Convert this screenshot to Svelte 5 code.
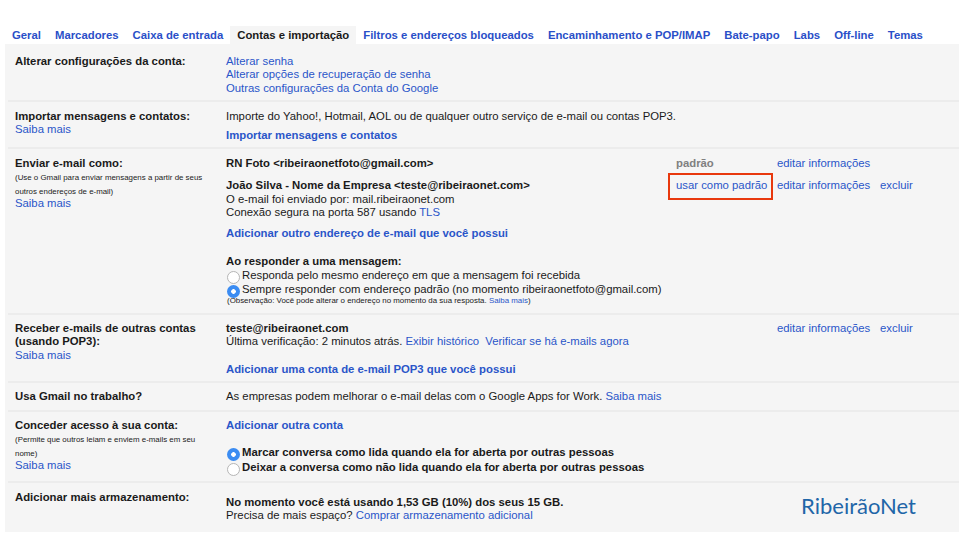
<script>
    const tabs = ['Geral', 'Marcadores', 'Caixa de entrada', 'Contas e importação', 'Filtros e endereços bloqueados', 'Encaminhamento e POP/IMAP', 'Bate-papo', 'Labs', 'Off-line', 'Temas'];
    const active = 'Contas e importação';
</script>

<div class="page">
    <nav class="tabs">
        {#each tabs as tab}
            <span class="tab" class:active={tab === active}>{tab}</span>
        {/each}
    </nav>

    <div class="panel">
        <section class="row r1">
            <div class="label"><b>Alterar configurações da conta:</b></div>
            <div class="main">
                <a href="#a">Alterar senha</a><br>
                <a href="#a">Alterar opções de recuperação de senha</a><br>
                <a href="#a">Outras configurações da Conta do Google</a>
            </div>
        </section>

        <section class="row r2">
            <div class="label"><b>Importar mensagens e contatos:</b><br><a href="#a">Saiba mais</a></div>
            <div class="main">
                Importe do Yahoo!, Hotmail, AOL ou de qualquer outro serviço de e-mail ou contas POP3.
                <p class="action"><a href="#a"><b>Importar mensagens e contatos</b></a></p>
            </div>
        </section>

        <section class="row r3">
            <div class="label">
                <b>Enviar e-mail como:</b>
                <p class="small">(Use o Gmail para enviar mensagens a partir de seus outros endereços de e-mail)</p>
                <a href="#a">Saiba mais</a>
            </div>
            <div class="main">
                <div class="acct first">
                    <b>RN Foto &lt;ribeiraonetfoto@gmail.com&gt;</b>
                    <b class="grey">padrão</b>
                    <a href="#a">editar informações</a>
                    <span></span>
                </div>
                <div class="acct">
                    <div>
                        <b>João Silva - Nome da Empresa &lt;teste@ribeiraonet.com&gt;</b><br>
                        O e-mail foi enviado por: mail.ribeiraonet.com<br>
                        Conexão segura na porta 587 usando <a href="#a">TLS</a>
                    </div>
                    <div><a class="boxed" href="#a">usar como padrão</a></div>
                    <a href="#a">editar informações</a>
                    <a href="#a">excluir</a>
                </div>
                <p class="add"><a href="#a"><b>Adicionar outro endereço de e-mail que você possui</b></a></p>
                <p class="reply"><b>Ao responder a uma mensagem:</b></p>
                <div class="opt"><i class="radio"></i>Responda pelo mesmo endereço em que a mensagem foi recebida</div>
                <div class="opt"><i class="radio on"></i>Sempre responder com endereço padrão (no momento ribeiraonetfoto@gmail.com)</div>
                <p class="note">(Observação: Você pode alterar o endereço no momento da sua resposta. <a href="#a">Saiba mais</a>)</p>
            </div>
        </section>

        <section class="row r4">
            <div class="label"><b>Receber e-mails de outras contas (usando POP3):</b><br><a href="#a">Saiba mais</a></div>
            <div class="main">
                <div class="acct">
                    <div>
                        <b>teste@ribeiraonet.com</b><br>
                        Última verificação: 2 minutos atrás. <a href="#a">Exibir histórico</a>
                        <a class="verify" href="#a">Verificar se há e-mails agora</a>
                    </div>
                    <span></span>
                    <a href="#a">editar informações</a>
                    <a href="#a">excluir</a>
                </div>
                <p class="add pop"><a href="#a"><b>Adicionar uma conta de e-mail POP3 que você possui</b></a></p>
            </div>
        </section>

        <section class="row r5">
            <div class="label"><b>Usa Gmail no trabalho?</b></div>
            <div class="main">As empresas podem melhorar o e-mail delas com o Google Apps for Work. <a href="#a">Saiba mais</a></div>
        </section>

        <section class="row r6">
            <div class="label">
                <b>Conceder acesso à sua conta:</b>
                <p class="small">(Permite que outros leiam e enviem e-mails em seu nome)</p>
                <a href="#a">Saiba mais</a>
            </div>
            <div class="main">
                <a href="#a"><b>Adicionar outra conta</b></a>
                <div class="opt gap"><i class="radio on"></i><b>Marcar conversa como lida quando ela for aberta por outras pessoas</b></div>
                <div class="opt"><i class="radio"></i><b>Deixar a conversa como não lida quando ela for aberta por outras pessoas</b></div>
            </div>
        </section>

        <section class="row r7">
            <div class="label"><b>Adicionar mais armazenamento:</b></div>
            <div class="main storage">
                <div>
                    <b>No momento você está usando 1,53 GB (10%) dos seus 15 GB.</b><br>
                    Precisa de mais espaço? <a href="#a">Comprar armazenamento adicional</a>
                </div>
                <div class="logo">RibeirãoNet</div>
            </div>
        </section>
    </div>
</div>

<style>
    :global(body) {
        background: #fff;
    }

    .page {
        width: 960px;
        height: 543px;
        padding-top: 26px;
        box-sizing: border-box;
        font-family: "Liberation Sans", Arial, sans-serif;
        font-size: 11.33px;
        line-height: 13.3px;
        color: #1a1a1a;
        overflow: hidden;
    }

    a {
        color: #2a55c9;
        text-decoration: none;
    }

    p {
        margin: 0;
    }

    .tabs {
        display: flex;
        height: 18px;
        padding-left: 5px;
    }

    .tab {
        padding: 3px 7px 0;
        font-weight: bold;
        color: #2a4fc8;
        white-space: nowrap;
    }

    .tab.active {
        background: #f5f5f5;
        color: #1a1a1a;
    }

    .panel {
        margin-left: 5px;
        width: 954px;
        height: 488px;
        background: #f5f5f5;
    }

    .row {
        display: grid;
        grid-template-columns: 211px 1fr;
        box-sizing: border-box;
        margin-left: 3px;
        padding: 11px 0 0 7px;
        border-bottom: 2px solid #ececec;
    }

    .r1 { height: 58px; }
    .r2 { height: 47px; padding-top: 8px; }
    .r3 { height: 166px; padding-top: 8px; }
    .r4 { height: 68px; padding-top: 7px; }
    .r5 { height: 29px; padding-top: 7px; }
    .r6 { height: 71px; padding-top: 7px; }
    .r7 { height: 49px; padding-top: 8px; border-bottom: 0; }

    .label {
        padding-right: 8px;
    }

    .small {
        font-size: 7.9px;
        line-height: 13.3px;
        margin: 1px 0 -1px;
        color: #222;
    }

    .action {
        margin-top: 6px;
    }

    .acct {
        display: grid;
        grid-template-columns: 450px 101px 103px auto;
    }

    .first {
        margin-bottom: 9px;
    }

    .grey {
        color: #808080;
    }

    .boxed {
        position: relative;
        display: inline-block;
    }

    .boxed::after {
        content: "";
        position: absolute;
        left: -8px;
        top: -6px;
        width: 101px;
        height: 23px;
        border: 2px solid #e8380d;
    }

    .verify {
        margin-left: 3px;
    }

    .add {
        margin-top: 8px;
    }

    .pop {
        margin-top: 14px;
    }

    .reply {
        margin-top: 15px;
    }

    .opt {
        display: flex;
        align-items: flex-start;
        height: 14.7px;
        white-space: nowrap;
    }

    .gap {
        margin-top: 14px;
    }

    .radio {
        flex: none;
        box-sizing: border-box;
        width: 13px;
        height: 13px;
        margin: 2px 2px 0 1px;
        border-radius: 50%;
        border: 1px solid #b5b5b5;
        background: #fff;
    }

    .radio.on {
        border: 0;
        background: radial-gradient(circle, #fff 0 2px, #3b8cf2 2.6px);
    }

    .note {
        font-size: 7.9px;
        line-height: 10px;
        margin-top: -2px;
        margin-left: 1px;
    }

    .storage {
        display: flex;
        justify-content: space-between;
        padding-top: 5px;
    }

    .logo {
        margin: -3px 43px 0 0;
        font-family: Lato, sans-serif;
        font-size: 22px;
        line-height: 26px;
        color: #1f66a8;
    }
</style>
